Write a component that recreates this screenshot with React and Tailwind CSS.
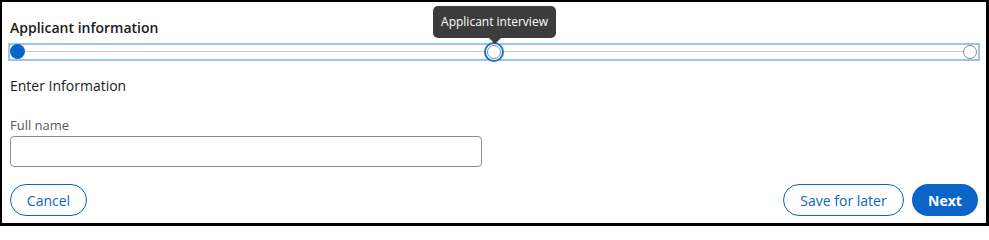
export default function App() {
  return (
    <div className="w-[989px] h-[226px] border-l-2 border-t-2 border-r-[3px] border-b-[3px] border-black bg-white px-2 flex flex-col font-['Open_Sans',sans-serif] text-[#1a1a1a]">
      <div className="pt-[16px] text-[14px] leading-[20px] font-semibold">Applicant information</div>
      <div className="relative mt-[5px] -mx-[2px] h-[18px] border-2 border-[#9fc4ec]">
        <div className="absolute left-[6px] right-[6px] top-[6px] h-px bg-[#c9c9c9]" />
        <div className="absolute left-[0px] top-[-1px] w-[15px] h-[15px] rounded-full bg-[#0b65c8]" />
        <div className="absolute left-[474px] top-[-3px] w-[20px] h-[20px] rounded-full border-2 border-[#1a73d4] bg-white flex items-center justify-center">
          <div className="w-[14px] h-[14px] rounded-full border border-[#8a8a8a] bg-white" />
        </div>
        <div className="absolute right-[1px] top-[-0.5px] w-[14px] h-[14px] rounded-full border border-[#8a8a8a] bg-white" />
        <div className="absolute left-[423px] top-[-39px] flex flex-col items-center">
          <div className="w-[123px] h-[32px] rounded-[5px] bg-[#3c3c3c] text-white text-[12px] flex items-center justify-center">
            Applicant interview
          </div>
          <div className="w-0 h-0 border-l-[6px] border-r-[6px] border-t-[6px] border-l-transparent border-r-transparent border-t-[#3c3c3c]" />
        </div>
      </div>
      <div className="mt-[15px] text-[14px] leading-[20px]">Enter Information</div>
      <div className="mt-[20px] text-[13px] leading-[18px] text-[#5a5a5a]">Full name</div>
      <input className="mt-[2px] w-[472px] h-[31px] shrink-0 border border-[#8c8c8c] rounded-[4px] outline-none px-2" />
      <div className="mt-[17px] flex items-center">
        <button className="h-[32px] w-[77px] rounded-full border border-[#0b65c8] text-[14px] text-[#0b65c8] bg-white">Cancel</button>
        <div className="flex-1" />
        <button className="h-[32px] w-[121px] rounded-full border border-[#0b65c8] text-[14px] text-[#0b65c8] bg-white">Save for later</button>
        <button className="ml-[8px] h-[32px] w-[66px] rounded-full bg-[#0b65c8] text-[14px] font-bold text-white">Next</button>
      </div>
    </div>
  );
}
